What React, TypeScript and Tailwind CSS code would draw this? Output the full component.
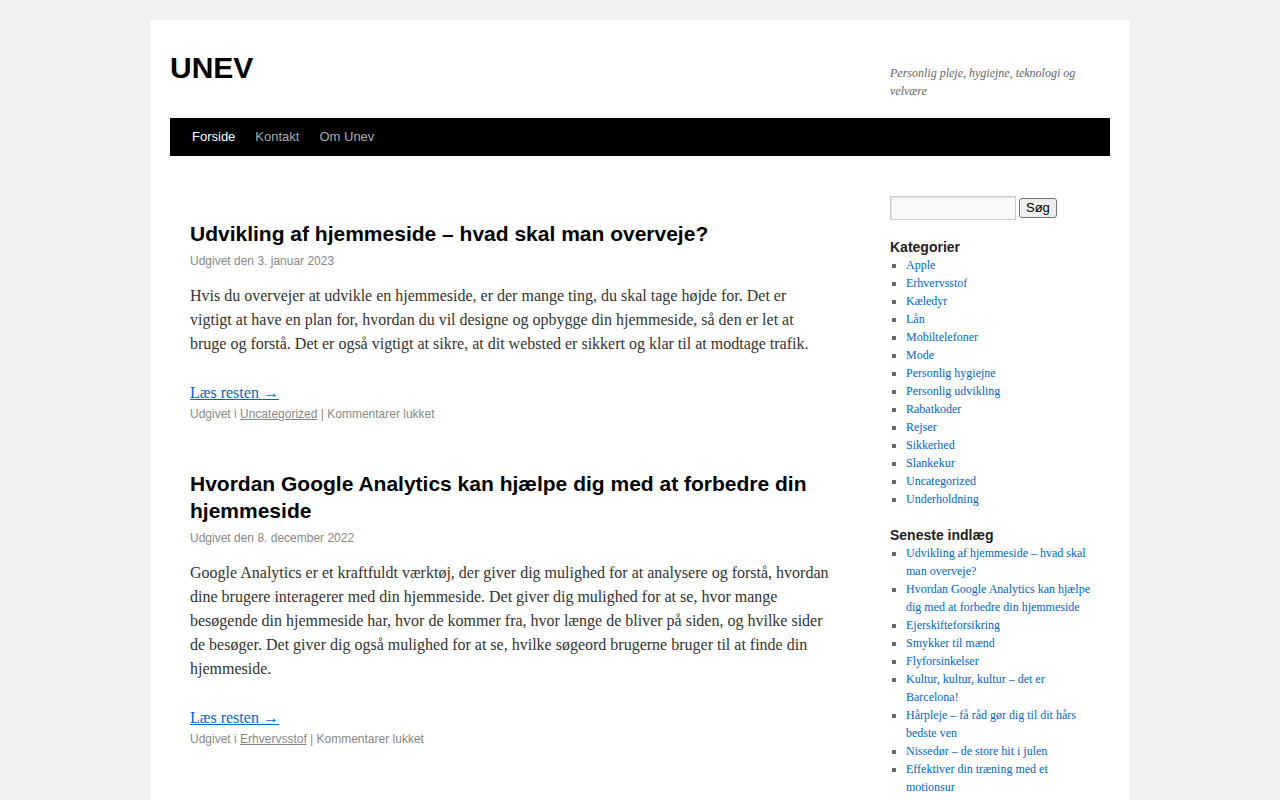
const sans = "font-['Liberation_Sans',Arial,sans-serif]";
const serif = "font-['Liberation_Serif','Times_New_Roman',serif]";

const categories = [
    "Apple",
    "Erhvervsstof",
    "Kæledyr",
    "Lån",
    "Mobiltelefoner",
    "Mode",
    "Personlig hygiejne",
    "Personlig udvikling",
    "Rabatkoder",
    "Rejser",
    "Sikkerhed",
    "Slankekur",
    "Uncategorized",
    "Underholdning",
];

const recent = [
    "Udvikling af hjemmeside – hvad skal man overveje?",
    "Hvordan Google Analytics kan hjælpe dig med at forbedre din hjemmeside",
    "Ejerskifteforsikring",
    "Smykker til mænd",
    "Flyforsinkelser",
    "Kultur, kultur, kultur – det er Barcelona!",
    "Hårpleje – få råd gør dig til dit hårs bedste ven",
    "Nissedør – de store hit i julen",
    "Effektiver din træning med et motionsur",
];

type PostProps = {
    title: string;
    date: string;
    text: string;
    category: string;
};

function Post({ title, date, text, category }: PostProps) {
    return (
        <article className="mb-[47px]">
            <h2 className={`${sans} text-[21px] leading-[27px] font-bold text-black`}>
                <a href="#">{title}</a>
            </h2>
            <div className={`${sans} mt-[5px] text-[12px] leading-[18px] text-[#888]`}>
                Udgivet den <a href="#">{date}</a>
            </div>
            <div className={`${serif} pt-[14px] text-[16px] leading-[24px] text-[#333]`}>
                <p className="mb-[25px]">{text}</p>
                <p>
                    <a href="#" className="text-[#0066cc] underline">
                        Læs resten <span>→</span>
                    </a>
                </p>
            </div>
            <div className={`${sans} text-[12px] leading-[18px] text-[#888]`}>
                Udgivet i{" "}
                <a href="#" className="underline">
                    {category}
                </a>{" "}
                | Kommentarer lukket
            </div>
        </article>
    );
}

function Widget({ title, items }: { title: string; items: string[] }) {
    return (
        <section className="mb-[18px]">
            <h3 className={`${sans} text-[14px] leading-[18px] font-bold text-[#222]`}>{title}</h3>
            <ul className={`${serif} list-[square] pl-[16px] pr-[15px] text-[12px] leading-[18px] text-[#666]`}>
                {items.map((item) => (
                    <li key={item}>
                        <a href="#" className="text-[#0066cc]">
                            {item}
                        </a>
                    </li>
                ))}
            </ul>
        </section>
    );
}

function App() {
    return (
        <div className="min-h-screen bg-[#f1f1f1] pt-[20px]">
            <div className="mx-auto w-[980px] bg-white px-[20px] pb-[40px]">
                <header className="flex justify-between mb-[17px]">
                    <h1 className={`${sans} pt-[30px] text-[30px] leading-[36px] font-bold text-black`}>
                        <a href="#">UNEV</a>
                    </h1>
                    <div className={`${serif} mt-[44px] mb-[1px] w-[220px] text-[12px] leading-[18px] italic text-[#666]`}>
                        Personlig pleje, hygiejne, teknologi og velvære
                    </div>
                </header>

                <nav className={`${sans} flex h-[38px] bg-black pl-[12px] text-[13px] leading-[38px]`}>
                    <a href="#" className="px-[10px] text-white">Forside</a>
                    <a href="#" className="px-[10px] text-[#aaa]">Kontakt</a>
                    <a href="#" className="px-[10px] text-[#aaa]">Om Unev</a>
                </nav>

                <div className="flex pt-[40px]">
                    <main className="ml-[20px] mr-[60px] w-[640px] pt-[24px]">
                        <Post
                            title="Udvikling af hjemmeside – hvad skal man overveje?"
                            date="3. januar 2023"
                            text="Hvis du overvejer at udvikle en hjemmeside, er der mange ting, du skal tage højde for. Det er vigtigt at have en plan for, hvordan du vil designe og opbygge din hjemmeside, så den er let at bruge og forstå. Det er også vigtigt at sikre, at dit websted er sikkert og klar til at modtage trafik."
                            category="Uncategorized"
                        />
                        <Post
                            title="Hvordan Google Analytics kan hjælpe dig med at forbedre din hjemmeside"
                            date="8. december 2022"
                            text="Google Analytics er et kraftfuldt værktøj, der giver dig mulighed for at analysere og forstå, hvordan dine brugere interagerer med din hjemmeside. Det giver dig mulighed for at se, hvor mange besøgende din hjemmeside har, hvor de kommer fra, hvor længe de bliver på siden, og hvilke sider de besøger. Det giver dig også mulighed for at se, hvilke søgeord brugerne bruger til at finde din hjemmeside."
                            category="Erhvervsstof"
                        />
                    </main>

                    <aside className="w-[220px]">
                        <form className="mb-[18px] flex items-center gap-[3px]" onSubmit={(e) => e.preventDefault()}>
                            <input
                                type="text"
                                className="h-[24px] w-[126px] border border-[#ccc] bg-[#f9f9f9] px-[2px] text-[12px] shadow-[inset_1px_1px_1px_rgba(0,0,0,0.1)] outline-none"
                            />
                            <button
                                type="submit"
                                className={`${sans} h-[20px] rounded-[3px] border border-[#767676] bg-[#efefef] px-[6px] text-[13px] leading-[16px] text-black`}
                            >
                                Søg
                            </button>
                        </form>
                        <Widget title="Kategorier" items={categories} />
                        <Widget title="Seneste indlæg" items={recent} />
                    </aside>
                </div>
            </div>
        </div>
    );
}

export default App;
